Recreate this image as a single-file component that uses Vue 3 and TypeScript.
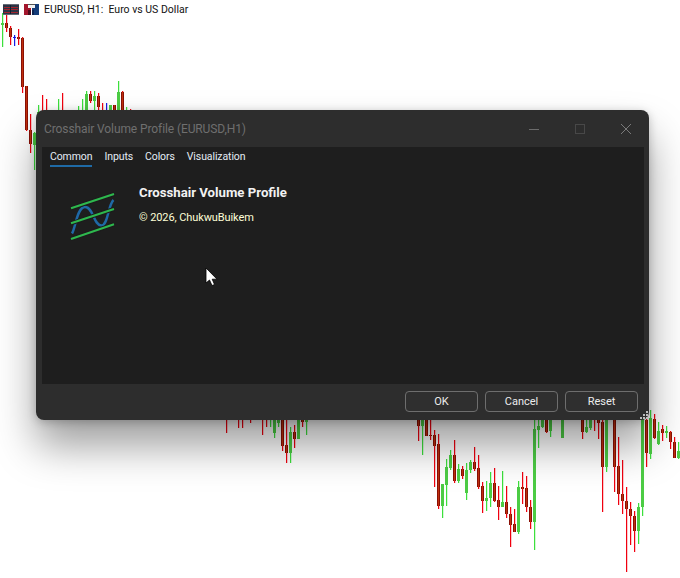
<template>
  <div class="screen">
    <svg class="chart" width="680" height="578" viewBox="0 0 680 578" shape-rendering="crispEdges">
      <g v-for="c in candles" :key="c.x">
        <rect :x="c.x + 1" :y="c.wt" width="1" :height="c.wb - c.wt" :fill="wickColor(c.kind)" opacity="0.22" />
        <rect :x="c.x" :y="c.wt" width="1" :height="c.wb - c.wt" :fill="wickColor(c.kind)" />
        <rect
          v-if="c.bb > c.bt"
          :x="c.x - 1"
          :y="c.bt"
          width="3"
          :height="c.bb - c.bt"
          :fill="bodyColor(c.kind)"
        />
        <rect v-if="c.kind === 'r' && c.bb > c.bt" :x="c.x - 1" :y="c.bt" width="1" :height="c.bb - c.bt" fill="#8a1006" />
        <rect v-if="c.kind === 'r' && c.bb > c.bt" :x="c.x + 1" :y="c.bt" width="1" :height="c.bb - c.bt" fill="#8a1006" />
      </g>
    </svg>

    <div class="chart-head">
      <svg class="flag" width="16" height="11" viewBox="0 0 16 11" shape-rendering="crispEdges">
        <rect x="0" y="0" width="16" height="11" fill="#2b3445" />
        <rect x="0" y="0" width="16" height="1" fill="#666b76" />
        <rect x="0" y="10" width="16" height="1" fill="#666b76" />
        <rect x="1" y="3" width="14" height="1" fill="#a3242e" />
        <rect x="1" y="5" width="14" height="1" fill="#a3242e" />
        <rect x="1" y="8" width="14" height="1" fill="#a3242e" />
        <rect x="7" y="1" width="1" height="9" fill="#141c2e" />
      </svg>
      <svg class="flag" width="15" height="11" viewBox="0 0 15 11" shape-rendering="crispEdges">
        <rect x="0" y="0" width="7" height="11" fill="#a3162c" />
        <rect x="8" y="0" width="7" height="11" fill="#143c78" />
        <rect x="7" y="4" width="1" height="7" fill="#fff" />
        <rect x="4" y="0" width="7" height="4" fill="#f2f2f2" />
        <rect x="4" y="0" width="7" height="1" fill="#555" />
        <rect x="4" y="6" width="3" height="5" fill="#4a0c1c" />
        <rect x="8" y="6" width="2" height="5" fill="#0c2450" />
      </svg>
      <span class="symbol">EURUSD, H1:&nbsp; Euro vs US Dollar</span>
    </div>

    <section class="dialog">
      <header class="titlebar">
        <span class="title">Crosshair Volume Profile (EURUSD,H1)</span>
        <div class="win-buttons">
          <svg width="12" height="12" viewBox="0 0 12 12"><path d="M1 6.500h10" stroke="#6c6c6c" fill="none" /></svg>
          <svg width="12" height="12" viewBox="0 0 12 12"><rect x="1.500" y="1.500" width="9" height="9" stroke="#484848" fill="none" /></svg>
          <svg width="12" height="12" viewBox="0 0 12 12"><path d="M1 1l10 10M11 1L1 11" stroke="#7a7a7a" fill="none" /></svg>
        </div>
      </header>

      <div class="panel">
        <nav class="tabs">
          <span v-for="t in tabs" :key="t" class="tab" :class="{ active: t === 'Common' }">{{ t }}</span>
        </nav>
        <div class="about">
          <svg class="logo" width="60" height="60" viewBox="0 0 60 60" fill="none">
            <path
              d="M12 48.500C15.500 43 17 22 25 22C33.500 22 33.500 40.500 41.500 40.500C48 40.500 48 20 53.500 15"
              stroke="#1f69a6"
              stroke-width="2.400"
            />
            <g stroke="#1c1c1c" stroke-width="4">
              <path d="M11 23.300L54 9" />
              <path d="M11 38.300L54 24" />
              <path d="M11 54L54 39.300" />
            </g>
            <g stroke="#2eb84e" stroke-width="2">
              <path d="M11 23.300L54 9" />
              <path d="M11 38.300L54 24" />
              <path d="M11 54L54 39.300" />
            </g>
          </svg>
          <div class="about-text">
            <h1>Crosshair Volume Profile</h1>
            <p>© 2026, ChukwuBuikem</p>
          </div>
        </div>
      </div>

      <footer class="actions">
        <button v-for="b in buttons" :key="b" type="button">{{ b }}</button>
      </footer>
      <svg class="grip" width="9" height="9" viewBox="0 0 9 9" shape-rendering="crispEdges" fill="#bdbdbd">
        <rect x="6" y="0" width="2" height="2" />
        <rect x="3" y="3" width="2" height="2" />
        <rect x="6" y="3" width="2" height="2" />
        <rect x="0" y="6" width="2" height="2" />
        <rect x="3" y="6" width="2" height="2" />
        <rect x="6" y="6" width="2" height="2" />
      </svg>
    </section>

    <svg class="cursor" width="14" height="20" viewBox="0 0 14 20">
      <path d="M1 1V16L4.500 13L7 18.500L9.500 17.500L7.200 12.200H12Z" fill="#fff" stroke="#000" stroke-width="0.8" />
    </svg>
  </div>
</template>

<script setup lang="ts">
type Kind = 'r' | 'g' | 'b'

interface Candle {
  x: number
  wt: number
  wb: number
  bt: number
  bb: number
  kind: Kind
}

const tabs: string[] = ['Common', 'Inputs', 'Colors', 'Visualization']
const buttons: string[] = ['OK', 'Cancel', 'Reset']

// x, wick top, wick bottom, body top, body bottom, type
const raw: [number, number, number, number, number, Kind][] = [
  [2, 13, 47, 23, 25, 'g'], [6, 15, 32, 23, 28, 'r'], [10, 26, 45, 28, 37, 'r'], [14, 35, 46, 37, 38, 'b'],
  [18, 29, 45, 37, 39, 'r'], [22, 37, 93, 38, 87, 'r'], [26, 86, 131, 86, 130, 'r'], [30, 114, 153, 130, 144, 'r'],
  [34, 132, 170, 133, 145, 'g'], [38, 105, 120, 112, 120, 'g'], [42, 95, 120, 110, 110, 'r'], [46, 99, 120, 120, 120, 'r'],
  [58, 99, 120, 120, 120, 'g'], [62, 93, 120, 120, 120, 'r'], [78, 106, 120, 120, 120, 'g'], [82, 99, 120, 120, 120, 'g'],
  [86, 91, 120, 94, 120, 'g'], [90, 91, 103, 94, 101, 'r'], [94, 91, 120, 96, 101, 'g'], [98, 93, 120, 96, 107, 'r'],
  [102, 103, 120, 120, 120, 'r'], [106, 103, 120, 120, 120, 'b'], [110, 105, 120, 105, 120, 'g'], [114, 105, 120, 105, 120, 'r'],
  [118, 81, 120, 92, 120, 'g'], [122, 91, 120, 92, 120, 'r'], [126, 107, 120, 120, 120, 'g'], [130, 109, 120, 120, 120, 'r'],

  [226, 420, 433, 420, 420, 'r'], [238, 420, 428, 420, 420, 'r'], [242, 420, 428, 420, 420, 'r'], [250, 420, 423, 420, 420, 'r'],
  [262, 420, 435, 420, 420, 'r'], [266, 420, 427, 420, 420, 'r'], [270, 420, 427, 420, 420, 'g'], [274, 420, 438, 420, 433, 'g'],
  [278, 420, 427, 420, 423, 'g'], [282, 420, 451, 420, 446, 'r'], [286, 420, 463, 445, 453, 'r'], [290, 427, 463, 432, 453, 'g'],
  [294, 425, 448, 432, 439, 'r'], [298, 420, 439, 420, 439, 'g'], [302, 420, 427, 420, 422, 'r'], [306, 420, 435, 420, 422, 'g'],

  [418, 420, 441, 420, 426, 'r'], [422, 420, 455, 420, 426, 'g'], [426, 420, 436, 420, 436, 'r'], [430, 420, 440, 435, 436, 'r'],
  [434, 430, 487, 435, 446, 'r'], [438, 434, 509, 444, 506, 'r'], [442, 484, 518, 484, 506, 'g'], [446, 459, 506, 467, 485, 'g'],
  [450, 450, 470, 455, 468, 'g'], [454, 440, 483, 455, 481, 'r'], [458, 464, 483, 469, 481, 'g'], [462, 466, 479, 469, 476, 'r'],
  [466, 463, 500, 470, 493, 'g'], [470, 460, 473, 462, 470, 'g'], [474, 447, 471, 462, 469, 'r'], [478, 455, 489, 468, 487, 'r'],
  [482, 482, 513, 486, 501, 'r'], [486, 481, 511, 498, 501, 'g'], [490, 472, 507, 483, 498, 'g'], [494, 468, 502, 483, 501, 'r'],
  [498, 486, 520, 500, 507, 'r'], [502, 471, 507, 502, 507, 'g'], [506, 486, 518, 502, 514, 'r'], [510, 507, 547, 514, 525, 'r'],
  [514, 509, 532, 524, 532, 'r'], [518, 481, 534, 487, 532, 'g'], [522, 472, 504, 487, 489, 'r'], [526, 476, 512, 488, 507, 'r'],
  [530, 500, 529, 507, 522, 'r'], [534, 420, 550, 429, 522, 'g'], [538, 420, 448, 426, 430, 'g'], [542, 420, 428, 420, 427, 'g'],
  [546, 420, 433, 420, 432, 'r'], [550, 420, 437, 420, 431, 'g'], [562, 420, 438, 420, 438, 'g'], [582, 420, 439, 420, 432, 'r'],
  [586, 420, 433, 427, 432, 'g'], [590, 420, 430, 420, 428, 'g'], [594, 420, 431, 420, 420, 'r'], [598, 420, 439, 420, 423, 'r'],
  [602, 420, 512, 422, 467, 'r'], [606, 420, 472, 420, 467, 'g'], [614, 420, 492, 420, 467, 'r'], [618, 437, 505, 466, 494, 'r'],
  [622, 460, 514, 494, 501, 'r'], [626, 487, 572, 501, 509, 'r'], [630, 502, 545, 509, 516, 'r'], [634, 511, 552, 516, 531, 'r'],
  [638, 503, 544, 507, 531, 'g'], [642, 410, 516, 410, 507, 'g'], [646, 410, 467, 420, 453, 'r'], [650, 410, 459, 418, 454, 'g'],
  [654, 414, 439, 419, 438, 'r'], [658, 422, 445, 431, 444, 'g'], [662, 425, 441, 429, 433, 'r'], [666, 426, 438, 431, 433, 'g'],
  [670, 431, 449, 432, 442, 'r'], [674, 437, 458, 442, 458, 'r'], [678, 442, 459, 451, 458, 'g'],
]

const candles: Candle[] = raw.map(([x, wt, wb, bt, bb, kind]) => ({ x, wt, wb, bt, bb, kind }))

const wickColor = (k: Kind): string => (k === 'r' ? '#f0000f' : k === 'g' ? '#3ce03c' : '#1a1ae6')
const bodyColor = (k: Kind): string => (k === 'r' ? '#c0300c' : k === 'g' ? '#4ccc44' : '#1a1ae6')
</script>

<style>
html,
body {
  margin: 0;
  background: #fff;
}
</style>

<style scoped>
.screen {
  position: relative;
  width: 680px;
  height: 578px;
  overflow: hidden;
  background: #fff;
  font-family: Roboto, "Noto Sans", sans-serif;
}

.chart {
  position: absolute;
  left: 0;
  top: 0;
}

.chart-head {
  position: absolute;
  left: 3px;
  top: 4px;
  display: flex;
  align-items: center;
  height: 11px;
}

.flag + .flag {
  margin-left: 5px;
}

.symbol {
  margin-left: 5px;
  font: 10.500px Roboto, sans-serif;
  color: #111;
  white-space: nowrap;
}

.dialog {
  position: absolute;
  left: 36px;
  top: 110px;
  width: 613px;
  height: 310px;
  display: flex;
  flex-direction: column;
  background: #2d2d2d;
  border-radius: 8px;
  box-shadow: 0 26px 42px rgba(0, 0, 0, 0.38), 0 2px 10px rgba(0, 0, 0, 0.22);
}

.titlebar {
  height: 37px;
  flex: none;
  display: flex;
  align-items: center;
  justify-content: space-between;
  padding: 0 17px 0 8px;
}

.title {
  font-size: 12px;
  letter-spacing: -0.1px;
  color: #6f6f6f;
  white-space: nowrap;
}

.win-buttons {
  display: flex;
  gap: 34px;
}

.panel {
  flex: none;
  height: 237px;
  margin: 0 5px 0 6px;
  background: #1e1e1e;
  box-sizing: border-box;
  padding: 0 8px;
}

.tabs {
  display: flex;
  gap: 12px;
  height: 20px;
}

.tab {
  height: 19px;
  padding-top: 2px;
  box-sizing: border-box;
  font-size: 10.500px;
  letter-spacing: -0.1px;
  line-height: 15px;
  color: #e4ecf4;
  white-space: nowrap;
}

.tab.active {
  height: 20px;
  border-bottom: 2px solid #1f6aa5;
}

.about {
  display: flex;
  padding: 17px 0 0 10px;
}

.logo {
  flex: none;
  margin-top: 1px;
}

.about-text {
  margin-left: 19px;
}

.about-text h1 {
  margin: 0;
  font-size: 13.200px;
  line-height: 18px;
  font-weight: 700;
  color: #f2f2f2;
  white-space: nowrap;
}

.about-text p {
  margin: 8px 0 0;
  font-size: 11px;
  letter-spacing: -0.1px;
  line-height: 16px;
  color: #ffffd8;
  white-space: nowrap;
}

.actions {
  flex: 1;
  display: flex;
  justify-content: flex-end;
  gap: 7px;
  padding: 7px 11px 0 0;
}

.actions button {
  width: 73px;
  height: 21px;
  padding: 0;
  box-sizing: border-box;
  background: #2f2f2f;
  border: 1px solid #6e6e6e;
  border-radius: 4px;
  color: #ececec;
  font: 11px Roboto, "Noto Sans", sans-serif;
}

.grip {
  position: absolute;
  right: 0;
  bottom: 0;
}

.cursor {
  position: absolute;
  left: 205px;
  top: 267px;
}
</style>
